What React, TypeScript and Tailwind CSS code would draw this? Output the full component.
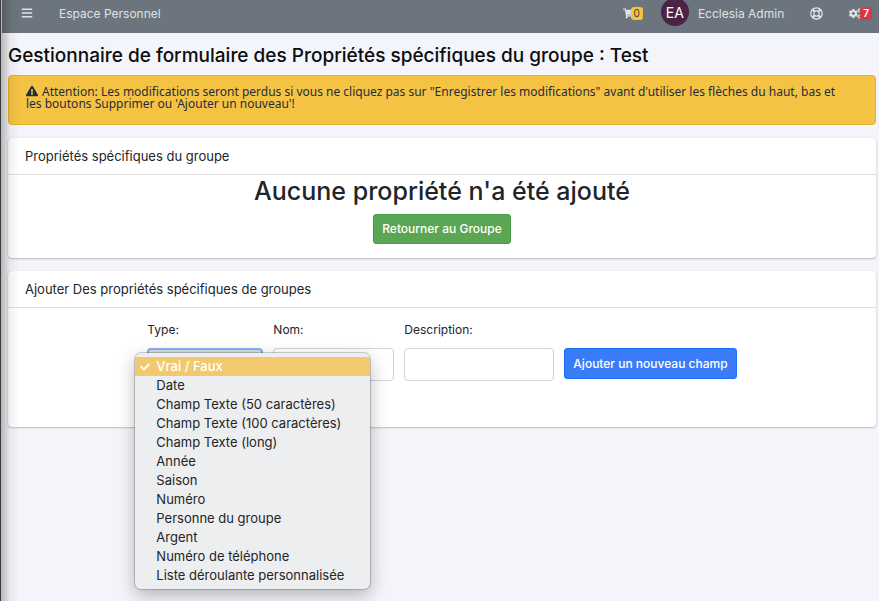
import type { ReactNode } from "react";
import { FaBars, FaCheck, FaCogs, FaExclamationTriangle, FaRegLifeRing, FaShoppingCart } from "react-icons/fa";

const FIELD_TYPES = [
  "Vrai / Faux",
  "Date",
  "Champ Texte (50 caractères)",
  "Champ Texte (100 caractères)",
  "Champ Texte (long)",
  "Année",
  "Saison",
  "Numéro",
  "Personne du groupe",
  "Argent",
  "Numéro de téléphone",
  "Liste déroulante personnalisée",
];

function TopBar() {
  return (
    <header className="flex h-[33px] items-start bg-[#6c757d] pr-[7px] pl-[19px] text-[#dfe2e5]">
      <button type="button" aria-label="Menu" className="mt-[7px]">
        <FaBars className="size-3" />
      </button>
      <a href="#" className="mt-[5px] ml-[26px] text-[12px] leading-[18px]">
        Espace Personnel
      </a>
      <nav className="ml-auto flex items-start">
        <a href="#" aria-label="Panier" className="mt-[7px] flex items-center">
          <FaShoppingCart className="size-[11px]" />
          <span className="-ml-[3px] rounded-[3px] bg-[#f4c242] px-[3px] text-[10px] leading-[13px] text-[#343a40]">0</span>
        </a>
        <a href="#" className="ml-[18px] flex items-start">
          <span className="-mt-[2px] flex size-7 items-center justify-center rounded-full bg-[#4a2347] text-[14px] text-white">
            EA
          </span>
          <span className="mt-[5px] ml-[9px] text-[12px] leading-[18px]">Ecclesia Admin</span>
        </a>
        <a href="#" aria-label="Aide" className="mt-[7px] ml-[26px]">
          <FaRegLifeRing className="size-[13px]" />
        </a>
        <a href="#" aria-label="Réglages" className="mt-[7px] ml-[26px] flex items-center">
          <FaCogs className="size-[13px]" />
          <span className="-ml-[2px] rounded-[3px] bg-[#d13a47] px-[3px] text-[10px] leading-[13px] font-semibold text-white">
            7
          </span>
        </a>
      </nav>
    </header>
  );
}

function Card({ title, children }: { title: string; children: ReactNode }) {
  return (
    <section className="rounded-[4px] bg-white shadow-[0_0_1px_rgba(0,0,0,0.15),0_1px_2px_rgba(0,0,0,0.22)]">
      <h2 className="border-b border-[#dfdfe1] px-[17px] py-[9px] text-[13px] leading-[18px]">{title}</h2>
      {children}
    </section>
  );
}

function TypeMenu() {
  return (
    <ul
      role="listbox"
      aria-label="Type"
      className="absolute top-[5px] -left-3 z-10 w-[235px] rounded-[6px] bg-[#edeef0] py-1 text-[13px] leading-[19px] text-[#242426] shadow-[0_0_0_1px_rgba(0,0,0,0.18),0_6px_18px_rgba(0,0,0,0.28)]"
    >
      {FIELD_TYPES.map((type, i) => (
        <li
          key={type}
          role="option"
          aria-selected={i === 0}
          className="flex items-center pl-[5px] aria-selected:bg-[#f3c970] aria-selected:font-medium aria-selected:text-white"
        >
          <span className="w-4">{i === 0 && <FaCheck className="size-[10px]" />}</span>
          {type}
        </li>
      ))}
    </ul>
  );
}

const fieldClass = "h-[33px] w-full rounded-[4px] border border-[#d0d4da] bg-white px-2 text-[12px]";

export default function App() {
  return (
    <div className="relative min-h-screen bg-[#f4f5fa] pl-[2px] font-['Inter',sans-serif] text-[#212529]">
      <TopBar />
      <main className="pr-[3px] pl-[6px]">
        <h1 className="pt-[10px] pb-[6px] text-[19px] leading-[26px] font-medium text-[#0c0d0f]">
          Gestionnaire de formulaire des Propriétés spécifiques du groupe : Test
        </h1>
        <div
          role="alert"
          className="mb-[13px] rounded-[4px] border border-[#e5b02a] bg-[#f5c344] pt-[9px] pr-6 pb-[14px] pl-[17px] font-['Noto_Sans',sans-serif] text-[12px] leading-3 text-[#1f2d3d]"
        >
          <FaExclamationTriangle className="mr-1 inline size-3 align-[-1px]" />
          Attention: Les modifications seront perdus si vous ne cliquez pas sur "Enregistrer les modifications" avant
          d'utiliser les flèches du haut, bas et les boutons Supprimer ou 'Ajouter un nouveau'!
        </div>

        <div className="flex flex-col gap-[13px]">
          <Card title="Propriétés spécifiques du groupe">
            <div className="flex flex-col items-center pb-[14px]">
              <p className="pb-[7px] text-[25px] leading-8 font-medium">Aucune propriété n'a été ajouté</p>
              <button
                type="button"
                className="h-[30px] rounded-[3px] border border-[#45a049] bg-[#5ba653] px-2 text-[12px] font-medium text-white"
              >
                Retourner au Groupe
              </button>
            </div>
          </Card>

          <Card title="Ajouter Des propriétés spécifiques de groupes">
            <form className="flex justify-center gap-[10px] pt-[13px] pb-[46px] text-[12px] leading-[18px]">
              <div className="w-[116px]">
                <label htmlFor="type">Type:</label>
                <div className="relative mt-[9px]">
                  <select id="type" className="h-[33px] w-full rounded-[4px] border-2 border-[#86b0f3] bg-[#dcdde0] px-2">
                    {FIELD_TYPES.map((type) => (
                      <option key={type}>{type}</option>
                    ))}
                  </select>
                  <TypeMenu />
                </div>
              </div>
              <div className="w-[121px]">
                <label htmlFor="nom">Nom:</label>
                <input id="nom" type="text" className={`mt-[9px] ${fieldClass}`} />
              </div>
              <div className="w-[150px]">
                <label htmlFor="description">Description:</label>
                <input id="description" type="text" className={`mt-[9px] ${fieldClass}`} />
              </div>
              <button
                type="button"
                className="mt-[27px] h-[31px] rounded-[3px] border border-[#1a6ff5] bg-[#3a7cf7] px-2 text-[12px] font-medium text-white"
              >
                Ajouter un nouveau champ
              </button>
            </form>
          </Card>
        </div>
      </main>
      <div className="pointer-events-none absolute inset-y-0 left-0 w-5 border-l border-[#3c3c3e] bg-linear-to-r from-black/25 via-black/5 to-transparent" />
    </div>
  );
}
